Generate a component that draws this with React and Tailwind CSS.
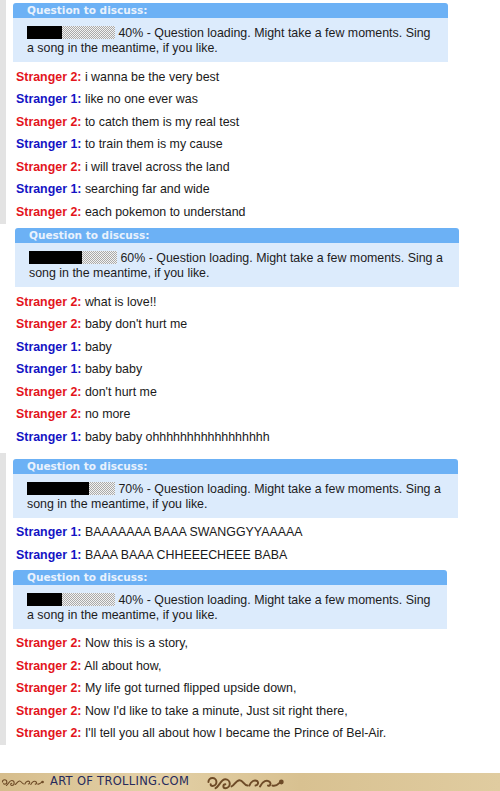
const SEGMENTS = [
  {
    id: 1,
    pct: 40,
    lines: ['40% - Question loading. Might take a few moments. Sing', 'a song in the meantime, if you like.'],
    msgs: [
      [2, 'i wanna be the very best'],
      [1, 'like no one ever was'],
      [2, 'to catch them is my real test'],
      [1, 'to train them is my cause'],
      [2, 'i will travel across the land'],
      [1, 'searching far and wide'],
      [2, 'each pokemon to understand'],
    ],
  },
  {
    id: 2,
    pct: 60,
    lines: ['60% - Question loading. Might take a few moments. Sing a', 'song in the meantime, if you like.'],
    msgs: [
      [2, 'what is love!!'],
      [2, "baby don't hurt me"],
      [1, 'baby'],
      [1, 'baby baby'],
      [2, "don't hurt me"],
      [2, 'no more'],
      [1, 'baby baby ohhhhhhhhhhhhhhhhh'],
    ],
  },
  {
    id: 3,
    pct: 70,
    lines: ['70% - Question loading. Might take a few moments. Sing a', 'song in the meantime, if you like.'],
    msgs: [
      [1, 'BAAAAAAA BAAA SWANGGYYAAAAA'],
      [1, 'BAAA BAAA CHHEEECHEEE BABA'],
    ],
  },
  {
    id: 4,
    pct: 40,
    lines: ['40% - Question loading. Might take a few moments. Sing', 'a song in the meantime, if you like.'],
    msgs: [
      [2, 'Now this is a story,'],
      [2, 'All about how,'],
      [2, 'My life got turned flipped upside down,'],
      [2, "Now I'd like to take a minute, Just sit right there,"],
      [2, "I'll tell you all about how I became the Prince of Bel-Air."],
    ],
  },
]

const BAR_BLACK = { 40: 'w-[35px]', 60: 'w-[53px]', 70: 'w-[62px]' }

function LoadingBar({ pct }) {
  return (
    <span className="inline-flex h-[13px] w-[88px] align-[-2px]">
      <span className={`h-full bg-black ${BAR_BLACK[pct]}`} />
      <span className="h-full flex-1 bg-[image:repeating-conic-gradient(#a9a9a9_0_25%,#f2f2f2_0_50%)] bg-size-[2px_2px]" />
    </span>
  )
}

function QuestionBox({ seg, className }) {
  return (
    <div className={className}>
      <div className="h-[15px] rounded-t-[3px] bg-[#6cb1f5] pl-[14px] font-['DejaVu_Sans',sans-serif] text-[10.5px] leading-[15px] font-bold text-[#e9f2fd]">
        Question to discuss:
      </div>
      <div className="h-[44px] bg-[#dcebfc] pl-[14px] pt-[8px] text-[12.4px] leading-[15px] text-[#1c1c1c] whitespace-nowrap">
        <LoadingBar pct={seg.pct} /> {seg.lines[0]}
        <br />
        {seg.lines[1]}
      </div>
    </div>
  )
}

function Message({ who, text }) {
  return (
    <div className="h-[22.5px] whitespace-nowrap text-[12.4px] leading-[22.5px] text-[#1a1a1a]">
      <span className={`font-bold ${who === 2 ? 'text-[#e3141c]' : 'text-[#1313c4]'}`}>
        Stranger {who}:
      </span>{' '}
      {text}
    </div>
  )
}

// brown scroll ornaments on the footer strip
function Swirl({ className }) {
  return (
    <svg className={className} viewBox="0 0 90 18" fill="none" stroke="#6e4b27" strokeWidth="2.2" strokeLinecap="round">
      <path d="M5 9a4.5 4.5 0 1 1 4.5 4.5a2 2 0 0 1-2-2" />
      <path d="M13 16c4-2 6-10 11-10a5 5 0 0 1 0 10a2.2 2.2 0 0 1 0-4.4" />
      <path d="M31 14c3-1 5-7 9-7s5 6 9 6" />
      <path d="M51 13c2-5 6-7 9-5a3 3 0 0 1-2 5" />
      <path d="M63 14c3-6 8-8 11-5c2 2 0 5-2 4" />
      <path d="M77 13c3 1 6-1 8-3" />
      <circle cx="87" cy="9" r="1.6" fill="#6e4b27" />
    </svg>
  )
}

export default function App() {
  const [s1, s2, s3, s4] = SEGMENTS
  return (
    <div className="flex h-[791px] w-[500px] flex-col overflow-hidden bg-white font-['Liberation_Sans',Arial,sans-serif]">
      {/* screenshot 1 */}
      <div className="h-[223.5px] border-l-[6px] border-[#e3e3e3] pl-[7px] pt-[3px]">
        <QuestionBox seg={s1} className="w-[435px]" />
        <div className="mt-[3.75px] pl-[3px]">
          {s1.msgs.map(([who, text], i) => (
            <Message key={i} who={who} text={text} />
          ))}
        </div>
      </div>

      {/* screenshot 2 */}
      <div className="h-[229.5px] pl-[15px] pt-[4.5px]">
        <QuestionBox seg={s2} className="w-[444px]" />
        <div className="mt-[3.75px] pl-[1px]">
          {s2.msgs.map(([who, text], i) => (
            <Message key={i} who={who} text={text} />
          ))}
        </div>
      </div>

      {/* screenshots 3 + 4 */}
      <div className="h-[292px] border-l-[6px] border-[#e3e3e3] pl-[7px] pt-[6px]">
        <QuestionBox seg={s3} className="w-[445px]" />
        <div className="mt-[3px] pl-[3px]">
          {s3.msgs.map(([who, text], i) => (
            <Message key={i} who={who} text={text} />
          ))}
        </div>
        <QuestionBox seg={s4} className="mt-[4.25px] w-[434px]" />
        <div className="mt-[3px] pl-[3px]">
          {s4.msgs.map(([who, text], i) => (
            <Message key={i} who={who} text={text} />
          ))}
        </div>
      </div>

      <div className="flex-1" />

      {/* footer */}
      <div className="flex h-[18px] items-center bg-[linear-gradient(90deg,#d6bd8c,#e3d0a6_30%,#d8c191_60%,#e0cca0)]">
        <Swirl className="h-[16px] w-[44px]" />
        <span className="ml-[6px] font-['DejaVu_Sans',sans-serif] text-[11.5px] leading-none tracking-[0.3px] text-[#262a5c]">
          ART OF TROLLING.COM
        </span>
        <Swirl className="ml-[10px] h-[16px] w-[90px]" />
      </div>
    </div>
  )
}
